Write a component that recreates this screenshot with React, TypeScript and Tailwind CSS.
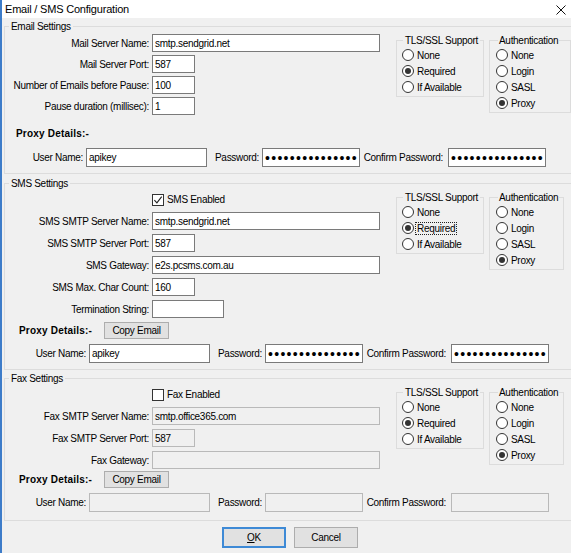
import type { ReactNode } from "react"

type Row = { label: string; value?: string; width: string; disabled?: boolean }

function TextBox({
  value = "",
  className = "",
  disabled = false,
  secret = false,
}: {
  value?: string
  className?: string
  disabled?: boolean
  secret?: boolean
}) {
  const tone = disabled ? "border-[#b9b9b9] bg-[#f0f0f0]" : "border-[#7a7a7a] bg-white"
  return (
    <div className={`flex shrink-0 items-center overflow-hidden whitespace-nowrap border pl-[2px] ${tone} ${className}`}>
      {secret ? (
        <span className="text-[14px] leading-none tracking-[1.3px]">{"•".repeat(15)}</span>
      ) : (
        value
      )}
    </div>
  )
}

function GroupBox({ title, className = "", children }: { title: string; className?: string; children: ReactNode }) {
  return (
    <fieldset className={`w-[575px] shrink-0 border border-[#dcdcdc] ${className}`}>
      <legend className="ml-[4px] px-[2px] leading-[13px]">{title}</legend>
      {children}
    </fieldset>
  )
}

function Radio({ label, checked = false, focused = false }: { label: string; checked?: boolean; focused?: boolean }) {
  return (
    <div className="flex h-[16px] items-center">
      <span className="flex h-[12px] w-[12px] shrink-0 items-center justify-center rounded-full border border-[#333] bg-white">
        {checked && <span className="h-[6px] w-[6px] rounded-full bg-[#333]" />}
      </span>
      <span
        className={`ml-[1px] whitespace-nowrap border px-[1px] leading-[11px] ${
          focused ? "border-dotted border-[#222]" : "border-transparent"
        }`}
      >
        {label}
      </span>
    </div>
  )
}

function TlsGroup({ focused = false }: { focused?: boolean }) {
  return (
    <fieldset className="ml-[16px] mt-[1px] w-[88px] shrink-0 border border-[#dcdcdc] pb-[1px] pl-[5px]">
      <legend className="ml-[1px] px-[2px] leading-[13px] whitespace-nowrap">TLS/SSL Support</legend>
      <Radio label="None" />
      <Radio label="Required" checked focused={focused} />
      <Radio label="If Available" />
    </fieldset>
  )
}

function AuthGroup({ wide = false }: { wide?: boolean }) {
  return (
    <fieldset
      className={`ml-[5px] mt-[1px] shrink-0 border border-[#dcdcdc] pb-[1px] pl-[6px] ${wide ? "w-[82px]" : "w-[75px]"}`}
    >
      <legend className="ml-[2px] px-[1px] leading-[13px] whitespace-nowrap">Authentication</legend>
      <Radio label="None" />
      <Radio label="Login" />
      <Radio label="SASL" />
      <Radio label="Proxy" checked />
    </fieldset>
  )
}

function CheckBox({ label, checked = false }: { label: string; checked?: boolean }) {
  return (
    <div className="ml-[147px] flex h-[13px] items-center">
      <span className="flex h-[12px] w-[12px] shrink-0 items-center justify-center border border-[#333] bg-white">
        {checked && (
          <svg width="10" height="10" viewBox="0 0 10 10">
            <path d="M1.4 5.2 L3.9 7.9 L8.7 1.6" fill="none" stroke="#222" strokeWidth="1.1" />
          </svg>
        )}
      </span>
      <span className="ml-[3px] whitespace-nowrap">{label}</span>
    </div>
  )
}

function FieldGrid({ rows, gap }: { rows: Row[]; gap: string }) {
  return (
    <div className={`grid grid-cols-[144px_228px] items-center gap-x-[3px] ${gap}`}>
      {rows.map((r) => (
        <div key={r.label} className="contents">
          <div className="whitespace-nowrap text-right">{r.label}</div>
          <TextBox value={r.value} disabled={r.disabled} className={`h-[18px] ${r.width}`} />
        </div>
      ))}
    </div>
  )
}

function Button({ children, className = "" }: { children: ReactNode; className?: string }) {
  return (
    <div className={`flex shrink-0 items-center justify-center border bg-[#e1e1e1] ${className}`}>{children}</div>
  )
}

function ProxyHeader({ className = "" }: { className?: string }) {
  return (
    <div className={`flex h-[17px] items-center ${className}`}>
      <div className="ml-[14px] w-[85px] font-bold tracking-[0.2px] leading-[13px]">Proxy Details:-</div>
      <Button className="h-[17px] w-[65px] border-[#adadad]">Copy Email</Button>
    </div>
  )
}

function ProxyLogin({
  first,
  user = "",
  filled = false,
  disabled = false,
  className = "",
}: {
  first: string
  user?: string
  filled?: boolean
  disabled?: boolean
  className?: string
}) {
  return (
    <div className={`flex h-[19px] items-center ${className}`}>
      <div className={`shrink-0 whitespace-nowrap pr-[3px] text-right ${first}`}>User Name:</div>
      <TextBox value={user} disabled={disabled} className="h-[19px] w-[121px]" />
      <div className="w-[55px] shrink-0 whitespace-nowrap pr-[3px] text-right">Password:</div>
      <TextBox secret={filled} disabled={disabled} className="h-[19px] w-[98px]" />
      <div className="w-[88px] shrink-0 whitespace-nowrap pr-[5px] text-right">Confirm Password:</div>
      <TextBox secret={filled} disabled={disabled} className="h-[19px] w-[98px]" />
    </div>
  )
}

const emailRows: Row[] = [
  { label: "Mail Server Name:", value: "smtp.sendgrid.net", width: "w-[228px]" },
  { label: "Mail Server Port:", value: "587", width: "w-[43px]" },
  { label: "Number of Emails before Pause:", value: "100", width: "w-[43px]" },
  { label: "Pause duration (millisec):", value: "1", width: "w-[43px]" },
]

const smsRows: Row[] = [
  { label: "SMS SMTP Server Name:", value: "smtp.sendgrid.net", width: "w-[228px]" },
  { label: "SMS SMTP Server Port:", value: "587", width: "w-[43px]" },
  { label: "SMS Gateway:", value: "e2s.pcsms.com.au", width: "w-[228px]" },
  { label: "SMS Max. Char Count:", value: "160", width: "w-[43px]" },
  { label: "Termination String:", value: "", width: "w-[72px]" },
]

const faxRows: Row[] = [
  { label: "Fax SMTP Server Name:", value: "smtp.office365.com", width: "w-[228px]", disabled: true },
  { label: "Fax SMTP Server Port:", value: "587", width: "w-[43px]", disabled: true },
  { label: "Fax Gateway:", value: "", width: "w-[228px]", disabled: true },
]

export default function App() {
  return (
    <div className="flex h-[553px] w-[571px] flex-col overflow-hidden border-l-2 border-[#3d7cc9] bg-[#f0f0f0] font-['Liberation_Sans',Arial,sans-serif] text-[10px] tracking-[-0.3px] text-black">
      {/* title bar */}
      <div className="flex h-[18px] shrink-0 items-center justify-between bg-white pl-[3px] pr-[5px]">
        <span className="text-[11px] tracking-[-0.2px]">Email / SMS Configuration</span>
        <svg width="10" height="10" viewBox="0 0 10 10" className="mt-[1px]">
          <path d="M0.5 0.5 L9.5 9.5 M9.5 0.5 L0.5 9.5" stroke="#111" strokeWidth="1" />
        </svg>
      </div>

      <div className="flex flex-col pl-[2px]">
        <GroupBox title="Email Settings" className="mt-[2px] pb-[6px]">
          <div className="flex items-start">
            <div className="pt-[1px]">
              <FieldGrid rows={emailRows} gap="gap-y-[3px]" />
            </div>
            <TlsGroup />
            <AuthGroup wide />
          </div>
          <div className="ml-[11px] mt-[12px] font-bold tracking-[0.2px] leading-[13px]">Proxy Details:-</div>
          <ProxyLogin first="w-[81px]" user="apikey" filled className="mt-[8px]" />
        </GroupBox>

        <GroupBox title="SMS Settings" className="mt-[3px] pb-[6px]">
          <div className="flex items-start">
            <div className="flex flex-col">
              <div className="mt-[3px]">
                <CheckBox label="SMS Enabled" checked />
              </div>
              <div className="mt-[6px]">
                <FieldGrid rows={smsRows} gap="gap-y-[4px]" />
              </div>
            </div>
            <TlsGroup focused />
            <AuthGroup />
          </div>
          <ProxyHeader className="mt-[4px]" />
          <ProxyLogin first="w-[84px]" user="apikey" filled className="mt-[5px]" />
        </GroupBox>

        <GroupBox title="Fax Settings" className="mt-[2px] pb-[8px]">
          <div className="flex items-start">
            <div className="flex flex-col">
              <div className="mt-[3px]">
                <CheckBox label="Fax Enabled" />
              </div>
              <div className="mt-[6px]">
                <FieldGrid rows={faxRows} gap="gap-y-[4px]" />
              </div>
            </div>
            <TlsGroup />
            <AuthGroup />
          </div>
          <ProxyHeader className="mt-[2px]" />
          <ProxyLogin first="w-[84px]" disabled className="mt-[5px]" />
        </GroupBox>

        <div className="ml-[218px] mt-[6px] flex gap-[8px]">
          <Button className="h-[21px] w-[64px] border-2 border-[#3e8ad6]">
            <span>
              <span className="underline">O</span>K
            </span>
          </Button>
          <Button className="h-[21px] w-[64px] border-[#adadad]">Cancel</Button>
        </div>
      </div>
    </div>
  )
}
